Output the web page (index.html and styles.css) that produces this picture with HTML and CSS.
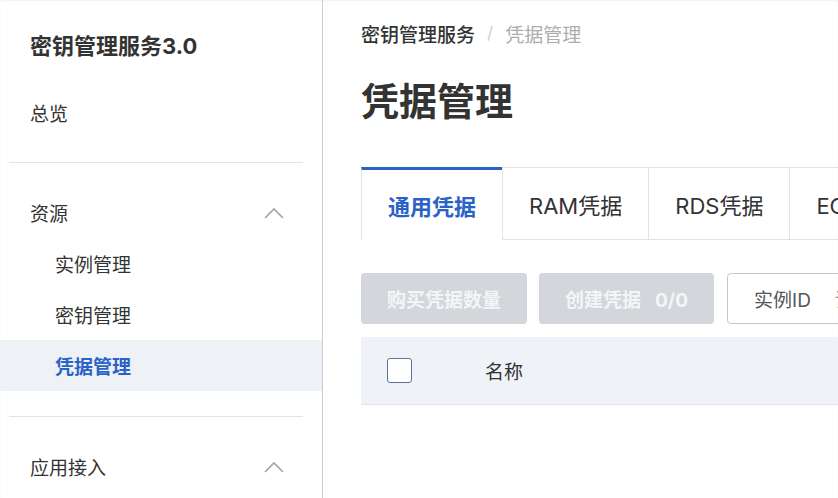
FILE: index.html
```html
<!DOCTYPE html>
<html lang="zh-CN">
<head>
<meta charset="utf-8">
<title>凭据管理</title>
<link rel="stylesheet" href="styles.css">
</head>
<body>
<div class="page">
  <aside class="sidebar">
    <div class="brand">密钥管理服务3.0</div>
    <div class="nav-item">总览</div>
    <div class="divider"></div>
    <div class="nav-group">
      <span>资源</span>
      <svg class="chev" width="20" height="12" viewBox="0 0 20 12"><polyline points="1,11 10,2 19,11" fill="none" stroke="#a3a3a3" stroke-width="1.6"/></svg>
    </div>
    <div class="nav-sub">实例管理</div>
    <div class="nav-sub">密钥管理</div>
    <div class="nav-sub active">凭据管理</div>
    <div class="divider second"></div>
    <div class="nav-group">
      <span>应用接入</span>
      <svg class="chev" width="20" height="12" viewBox="0 0 20 12"><polyline points="1,11 10,2 19,11" fill="none" stroke="#a3a3a3" stroke-width="1.6"/></svg>
    </div>
  </aside>
  <main class="main">
    <nav class="crumbs">
      <span class="crumb-root">密钥管理服务</span>
      <span class="crumb-sep">/</span>
      <span class="crumb-cur">凭据管理</span>
    </nav>
    <h1 class="title">凭据管理</h1>
    <div class="tabs">
      <div class="tab active">通用凭据</div>
      <div class="tab">RAM凭据</div>
      <div class="tab">RDS凭据</div>
      <div class="tab">ECS凭据</div>
    </div>
    <div class="toolbar">
      <button class="btn">购买凭据数量</button>
      <button class="btn">创建凭据<span class="count">0/0</span></button>
      <div class="search">
        <span class="search-key">实例ID</span>
        <span class="search-ph">请输入实例ID进行搜索</span>
      </div>
    </div>
    <div class="thead">
      <span class="check"></span>
      <span class="col-name">名称</span>
    </div>
  </main>
</div>
</body>
</html>
```

FILE: styles.css
```css
html, body {
  margin: 0;
  padding: 0;
}
body {
  width: 838px;
  height: 498px;
  overflow: hidden;
  background: #fff;
  font-family: Inter, "Noto Sans CJK SC", sans-serif;
  color: #333;
}
.page {
  display: flex;
  height: 498px;
  box-shadow: inset 0 1px 2px rgba(0, 0, 0, 0.06);
}
.sidebar {
  width: 322px;
  flex: none;
  border-right: 1px solid #c7cdd6;
  display: flex;
  flex-direction: column;
}
.brand {
  padding: 32px 0 0 30px;
  height: 28px;
  line-height: 28px;
  margin-bottom: 27px;
  font-size: 22px;
  font-weight: 700;
  color: #333;
}
.nav-item,
.nav-group,
.nav-sub {
  height: 51px;
  display: flex;
  align-items: center;
  font-size: 19px;
  color: #333;
}
.nav-item,
.nav-group {
  padding-left: 30px;
}
.nav-group {
  justify-content: space-between;
  padding-right: 38px;
}
.nav-sub {
  padding-left: 55px;
}
.nav-sub.active {
  background: #eef1f6;
  color: #2a62c8;
  font-weight: 700;
}
.divider {
  height: 1px;
  background: #e1e4e8;
  margin: 24px 19px 24px 9px;
}
.divider.second {
  margin-top: 25px;
}
.main {
  flex: 1;
  min-width: 0;
  overflow: hidden;
  padding-left: 38px;
}
.crumbs {
  height: 66px;
  display: flex;
  align-items: center;
  font-size: 19px;
}
.crumb-root {
  color: #333;
  font-weight: 500;
}
.crumb-sep {
  color: #d0d0d0;
  margin: 0 12px;
  font-size: 17px;
}
.crumb-cur {
  color: #adadad;
}
.title {
  margin: 10px 0 0;
  height: 50px;
  line-height: 50px;
  font-size: 38px;
  font-weight: 700;
  color: #333;
}
.tabs {
  margin-top: 41px;
  display: flex;
  white-space: nowrap;
}
.tab {
  box-sizing: border-box;
  height: 73px;
  padding: 0 26px;
  display: flex;
  align-items: center;
  font-size: 22px;
  color: #333;
  border-top: 1px solid #e2e2e2;
  border-left: 1px solid #e2e2e2;
  border-bottom: 1px solid #e2e2e2;
  flex: none;
}
.tab.active {
  border-top: 3px solid #2a62c8;
  border-bottom-color: transparent;
  color: #2a62c8;
  font-weight: 700;
  padding-top: 0;
}
.toolbar {
  margin-top: 33px;
  display: flex;
  gap: 12px;
  height: 51px;
}
.btn {
  height: 51px;
  padding: 0 26px;
  border: none;
  border-radius: 4px;
  background: #d3d6da;
  color: #f4f5f7;
  font-family: inherit;
  font-size: 19px;
  font-weight: 700;
  flex: none;
}
.count {
  margin-left: 14px;
}
.search {
  box-sizing: border-box;
  margin-left: 1px;
  width: 320px;
  flex: none;
  height: 51px;
  border: 1px solid #c4c8ce;
  border-radius: 4px;
  display: flex;
  align-items: center;
  padding-left: 26px;
  font-size: 19px;
  white-space: nowrap;
  overflow: hidden;
}
.search-key {
  color: #555;
}
.search-ph {
  margin-left: 24px;
  color: #999;
}
.thead {
  margin-top: 13px;
  box-sizing: border-box;
  height: 68px;
  background: #eff2f7;
  border-bottom: 1px solid #e0e3e8;
  display: flex;
  align-items: center;
  padding-left: 26px;
}
.check {
  box-sizing: border-box;
  width: 25px;
  height: 25px;
  border: 1px solid #5b7499;
  border-radius: 3px;
  background: #fff;
  flex: none;
}
.col-name {
  margin-left: 73px;
  font-size: 19px;
  color: #333;
}
```
